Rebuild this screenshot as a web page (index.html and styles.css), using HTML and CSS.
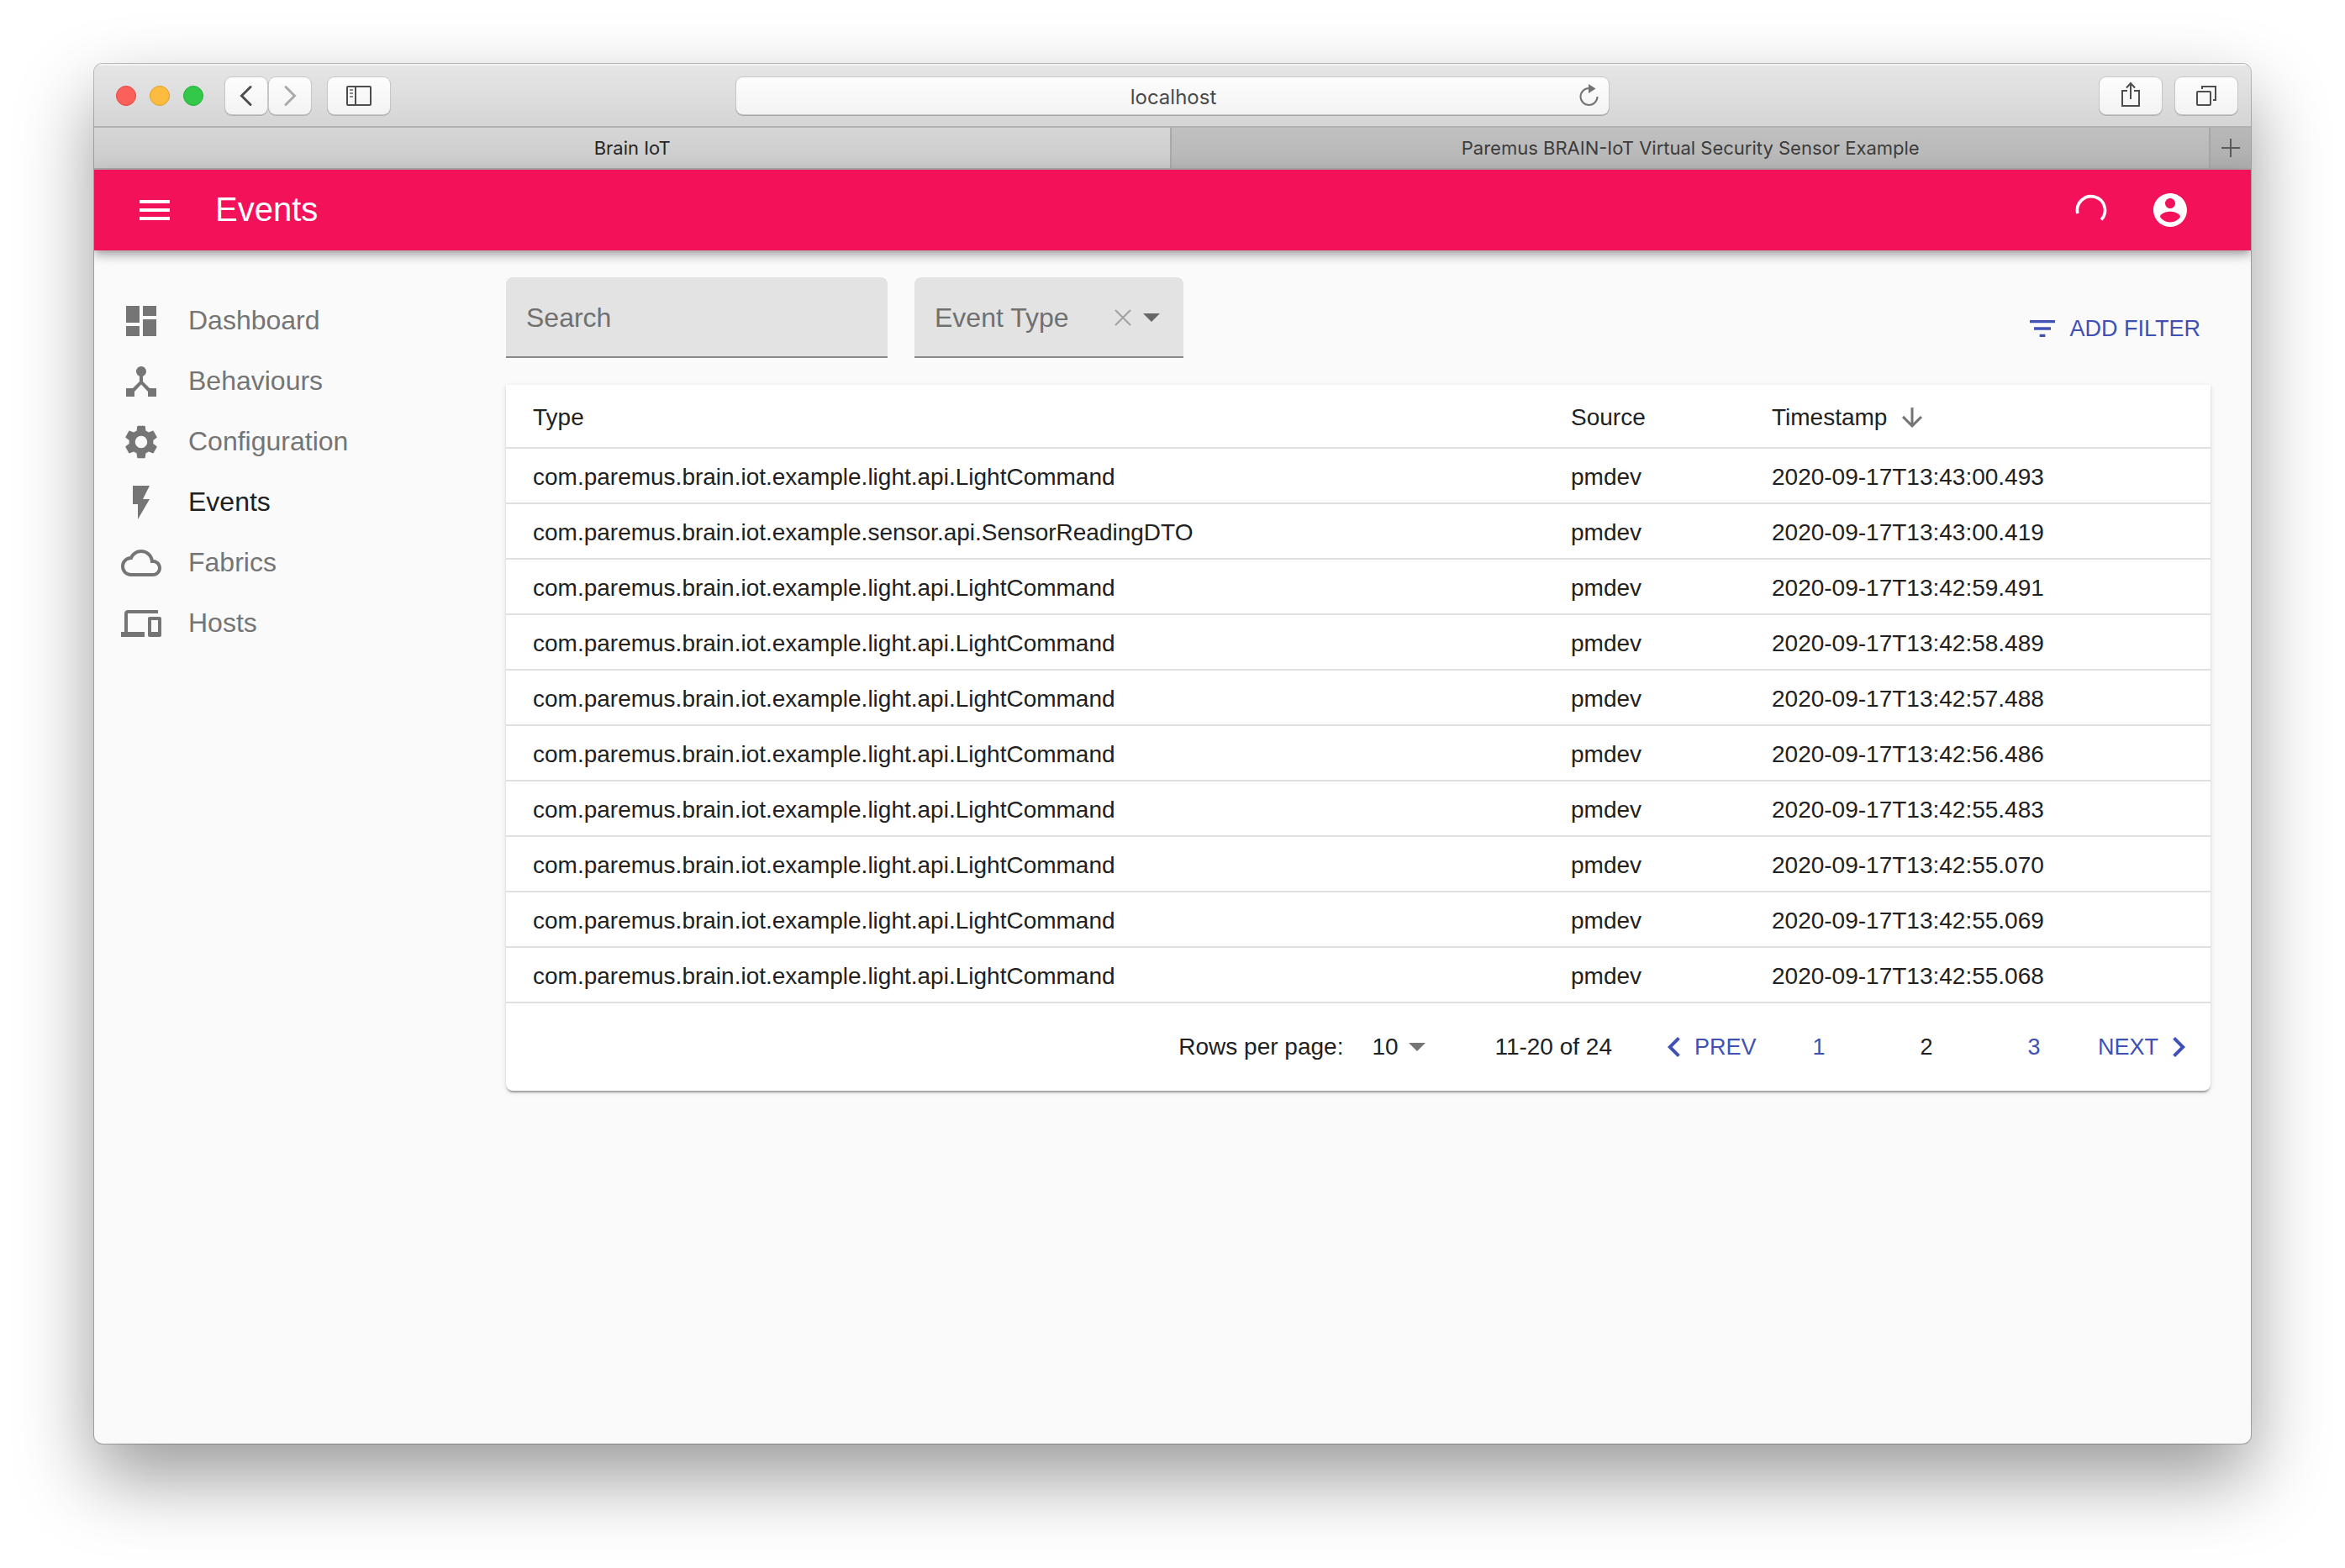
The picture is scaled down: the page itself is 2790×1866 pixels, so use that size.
FILE: index.html
```html
<!DOCTYPE html>
<html lang="en">
<head>
<meta charset="utf-8">
<meta name="viewport" content="width=device-width, initial-scale=1">
<title>Brain IoT</title>
<link rel="stylesheet" href="styles.css">
</head>
<body>
<div class="window">
  <header class="toolbar">
    <div class="toolbar-side">
      <div class="lights">
        <span class="light light-close"></span>
        <span class="light light-minimise"></span>
        <span class="light light-zoom"></span>
      </div>
      <div class="history">
        <button class="tool tool-narrow" type="button" aria-label="Back">
          <svg width="50" height="44" viewBox="0 0 50 44"><path d="M30 11.500L19.500 22L30 32.500" fill="none" stroke="#4d4d4d" stroke-width="3" stroke-linecap="round" stroke-linejoin="miter"/></svg>
        </button>
        <button class="tool tool-narrow" type="button" aria-label="Forward">
          <svg width="50" height="44" viewBox="0 0 50 44"><path d="M20 11.500L30.500 22L20 32.500" fill="none" stroke="#a9a9a9" stroke-width="3" stroke-linecap="round" stroke-linejoin="miter"/></svg>
        </button>
      </div>
      <button class="tool" type="button" aria-label="Show sidebar">
        <svg width="32" height="26" viewBox="0 0 32 26" fill="none" stroke="#4d4d4d" stroke-width="2"><rect x="2" y="2" width="28" height="22" rx="1"/><path d="M12 2v22"/><path d="M5 6h4M5 10h4M5 14h4" stroke="#8a8a8a"/></svg>
      </button>
    </div>
    <div class="address">
      <input class="address-input" type="text" value="localhost" aria-label="Address">
      <button class="reload" type="button" aria-label="Reload">
        <svg width="26" height="30" viewBox="0 0 26 30"><path d="M12.500 6A10 10 0 1 0 22.500 16" fill="none" stroke="#737373" stroke-width="2"/><path d="M12 1l8.500 5.500l-8.500 5.500z" fill="#737373"/></svg>
      </button>
    </div>
    <div class="toolbar-side toolbar-end">
      <button class="tool" type="button" aria-label="Share">
        <svg width="28" height="36" viewBox="0 0 28 36" fill="none" stroke="#4d4d4d" stroke-width="2"><path d="M10 12H4v18h20V12h-6"/><path d="M14 22V3M9 8.500l5-5.500l5 5.500"/></svg>
      </button>
      <button class="tool" type="button" aria-label="Show all tabs">
        <svg width="28" height="28" viewBox="0 0 28 28" fill="none" stroke="#4d4d4d" stroke-width="2"><rect x="3" y="9" width="16" height="16" rx="1"/><path d="M9 6V3h16v16h-3"/></svg>
      </button>
    </div>
  </header>
  <div class="tabs">
    <button class="tab tab-active" type="button">Brain IoT</button>
    <button class="tab" type="button">Paremus BRAIN-IoT Virtual Security Sensor Example</button>
    <button class="tab-new" type="button" aria-label="New tab">
      <svg width="24" height="24" viewBox="0 0 24 24" fill="none" stroke="#5a5a5a" stroke-width="2"><path d="M12 1v22M1 12h22"/></svg>
    </button>
  </div>

  <div class="appbar">
    <button class="icon-button" type="button" aria-label="Menu">
      <svg class="icon" viewBox="0 0 24 24"><path d="M3 18h18v-2H3v2zm0-5h18v-2H3v2zm0-7v2h18V6H3z"/></svg>
    </button>
    <h1 class="title">Events</h1>
    <svg class="spinner" viewBox="0 0 40 40"><path d="M3.900 24A16.500 16.500 0 1 1 32 31.500" fill="none" stroke="#fff" stroke-width="3.600"/></svg>
    <button class="icon-button" type="button" aria-label="Account">
      <svg class="icon" viewBox="0 0 24 24"><path d="M12 2C6.480 2 2 6.480 2 12s4.480 10 10 10 10-4.480 10-10S17.520 2 12 2zm0 3c1.660 0 3 1.340 3 3s-1.340 3-3 3-3-1.340-3-3 1.340-3 3-3zm0 14.200c-2.500 0-4.710-1.280-6-3.220.03-1.990 4-3.080 6-3.080 1.990 0 5.970 1.090 6 3.080-1.290 1.940-3.500 3.220-6 3.220z"/></svg>
    </button>
  </div>

  <div class="app">
    <nav class="nav">
      <a class="nav-item" href="#dashboard"><svg class="icon" viewBox="0 0 24 24"><path d="M3 13h8V3H3v10zm0 8h8v-6H3v6zm10 0h8V11h-8v10zm0-18v6h8V3h-8z"/></svg><span class="nav-label">Dashboard</span></a>
      <a class="nav-item" href="#behaviours"><svg class="icon" viewBox="0 0 24 24"><path d="M17 16l-4-4V8.820C14.160 8.400 15 7.300 15 6c0-1.660-1.340-3-3-3S9 4.340 9 6c0 1.300.84 2.400 2 2.820V12l-4 4H3v5h5v-3.050l4-4.200 4 4.200V21h5v-5h-4z"/></svg><span class="nav-label">Behaviours</span></a>
      <a class="nav-item" href="#configuration"><svg class="icon" viewBox="0 0 24 24"><path d="M19.140 12.940c.04-.3.06-.61.06-.94 0-.32-.02-.64-.07-.94l2.030-1.580c.18-.14.23-.41.12-.61l-1.920-3.320c-.12-.22-.37-.29-.59-.22l-2.390.96c-.5-.38-1.030-.7-1.620-.94l-.36-2.540c-.04-.24-.24-.41-.48-.41h-3.840c-.24 0-.43.17-.47.41l-.36 2.540c-.59.24-1.130.57-1.620.94l-2.390-.96c-.22-.08-.47 0-.59.22L2.740 8.870c-.12.21-.08.47.12.61l2.030 1.580c-.05.3-.09.63-.09.94s.02.64.07.94l-2.030 1.580c-.18.14-.23.41-.12.61l1.920 3.320c.12.22.37.29.59.22l2.390-.96c.5.38 1.030.7 1.620.94l.36 2.540c.05.24.24.41.48.41h3.840c.24 0 .44-.17.47-.41l.36-2.540c.59-.24 1.130-.56 1.620-.94l2.390.96c.22.08.47 0 .59-.22l1.920-3.320c.12-.22.07-.47-.12-.61l-2.010-1.580zM12 15.600c-1.980 0-3.600-1.620-3.600-3.600s1.620-3.600 3.600-3.600 3.600 1.620 3.600 3.600-1.620 3.600-3.600 3.600z"/></svg><span class="nav-label">Configuration</span></a>
      <a class="nav-item nav-current" href="#events" aria-current="page"><svg class="icon" viewBox="0 0 24 24"><path d="M7 2v11h3v9l7-12h-4l4-8z"/></svg><span class="nav-label">Events</span></a>
      <a class="nav-item" href="#fabrics"><svg class="icon" viewBox="0 0 24 24"><path d="M19.350 10.040C18.670 6.590 15.640 4 12 4 9.110 4 6.600 5.640 5.350 8.040 2.340 8.360 0 10.910 0 14c0 3.310 2.690 6 6 6h13c2.760 0 5-2.240 5-5 0-2.640-2.050-4.780-4.650-4.960zM19 18H6c-2.210 0-4-1.790-4-4s1.790-4 4-4h.71C7.370 7.690 9.480 6 12 6c3.040 0 5.500 2.460 5.500 5.500v.5H19c1.660 0 3 1.340 3 3s-1.340 3-3 3z"/></svg><span class="nav-label">Fabrics</span></a>
      <a class="nav-item" href="#hosts"><svg class="icon" viewBox="0 0 24 24"><path d="M4 6h18V4H4c-1.100 0-2 .9-2 2v11H0v3h14v-3H4V6zm19 2h-6c-.55 0-1 .45-1 1v10c0 .55.45 1 1 1h6c.55 0 1-.45 1-1V9c0-.55-.45-1-1-1zm-1 9h-4v-7h4v7z"/></svg><span class="nav-label">Hosts</span></a>
    </nav>

    <main class="main">
      <div class="filters">
        <input class="field search" type="text" placeholder="Search" aria-label="Search">
        <div class="field event-type">
          <select class="event-select" aria-label="Event Type"><option>Event Type</option></select>
          <button class="clear" type="button" aria-label="Clear event type">
            <svg width="20" height="20" viewBox="0 0 20 20"><path d="M1 1l18 18M19 1L1 19" stroke="#a2a2a2" stroke-width="2"/></svg>
          </button>
          <svg class="caret" width="20" height="10" viewBox="0 0 20 10"><path d="M0 0h20L10 10z" fill="#666"/></svg>
        </div>
        <button class="add-filter" type="button"><svg class="icon icon-small" viewBox="0 0 24 24"><path d="M10 18h4v-2h-4v2zM3 6v2h18V6H3zm3 7h12v-2H6v2z"/></svg>Add filter</button>
      </div>

      <section class="card">
        <table class="events">
          <colgroup><col><col class="col-source"><col class="col-time"></colgroup>
          <thead>
            <tr><th scope="col">Type</th><th scope="col">Source</th><th scope="col" aria-sort="descending"><button class="sort" type="button">Timestamp<svg class="icon sort-arrow" viewBox="0 0 24 24"><path d="M20 12l-1.410-1.410L13 16.170V4h-2v12.170l-5.580-5.590L4 12l8 8 8-8z"/></svg></button></th></tr>
          </thead>
          <tbody>
            <tr><td>com.paremus.brain.iot.example.light.api.LightCommand</td><td>pmdev</td><td>2020-09-17T13:43:00.493</td></tr>
            <tr><td>com.paremus.brain.iot.example.sensor.api.SensorReadingDTO</td><td>pmdev</td><td>2020-09-17T13:43:00.419</td></tr>
            <tr><td>com.paremus.brain.iot.example.light.api.LightCommand</td><td>pmdev</td><td>2020-09-17T13:42:59.491</td></tr>
            <tr><td>com.paremus.brain.iot.example.light.api.LightCommand</td><td>pmdev</td><td>2020-09-17T13:42:58.489</td></tr>
            <tr><td>com.paremus.brain.iot.example.light.api.LightCommand</td><td>pmdev</td><td>2020-09-17T13:42:57.488</td></tr>
            <tr><td>com.paremus.brain.iot.example.light.api.LightCommand</td><td>pmdev</td><td>2020-09-17T13:42:56.486</td></tr>
            <tr><td>com.paremus.brain.iot.example.light.api.LightCommand</td><td>pmdev</td><td>2020-09-17T13:42:55.483</td></tr>
            <tr><td>com.paremus.brain.iot.example.light.api.LightCommand</td><td>pmdev</td><td>2020-09-17T13:42:55.070</td></tr>
            <tr><td>com.paremus.brain.iot.example.light.api.LightCommand</td><td>pmdev</td><td>2020-09-17T13:42:55.069</td></tr>
            <tr><td>com.paremus.brain.iot.example.light.api.LightCommand</td><td>pmdev</td><td>2020-09-17T13:42:55.068</td></tr>
          </tbody>
        </table>
        <div class="pagination">
          <label for="rows">Rows per page:</label>
          <div class="rows">
            <select class="rows-select" id="rows"><option>10</option></select>
            <svg class="caret" width="20" height="10" viewBox="0 0 20 10"><path d="M0 0h20L10 10z" fill="#757575"/></svg>
          </div>
          <span class="range">11-20 of 24</span>
          <div class="pages">
            <button class="page page-step" type="button"><svg class="icon" viewBox="0 0 24 24"><path d="M15.410 7.410L14 6l-6 6 6 6 1.410-1.410L10.830 12z"/></svg>Prev</button>
            <button class="page" type="button">1</button>
            <button class="page page-current" type="button" aria-current="page">2</button>
            <button class="page" type="button">3</button>
            <button class="page page-step" type="button">Next<svg class="icon" viewBox="0 0 24 24"><path d="M10 6L8.590 7.410 13.170 12l-4.580 4.590L10 18l6-6z"/></svg></button>
          </div>
        </div>
      </section>
    </main>
  </div>
</div>
</body>
</html>
```

FILE: styles.css
```css
* {
  box-sizing: border-box;
}

body {
  display: flex;
  min-height: 100vh;
  margin: 0;
  padding: 76px 112px 148px;
  background: #fff;
  color: #212121;
  font-family: "Liberation Sans", Arial, sans-serif;
  font-size: 28px;
  line-height: 40px;
}

button,
input,
select {
  margin: 0;
  padding: 0;
  border: 0;
  background: none;
  color: inherit;
  font: inherit;
  appearance: none;
}

svg {
  display: block;
  flex: none;
}

.window {
  display: flex;
  flex: 1;
  flex-direction: column;
  min-width: 0;
  overflow: hidden;
  border-radius: 10px;
  background: #fafafa;
  box-shadow: 0 0 0 1px rgba(0, 0, 0, 0.24), 0 40px 90px rgba(0, 0, 0, 0.4);
}

/* Browser toolbar */

.toolbar {
  display: flex;
  align-items: center;
  height: 76px;
  padding: 2px 16px 0;
  border-bottom: 2px solid #b1b1b1;
  background: linear-gradient(#e6e6e6, #d5d5d5);
  box-shadow: inset 0 2px #f3f3f3;
  font-family: Inter, sans-serif;
}

.toolbar-side {
  display: flex;
  flex: 1 0 0;
  align-items: center;
  gap: 20px;
}

.toolbar-end {
  justify-content: flex-end;
  gap: 16px;
}

.lights {
  display: flex;
  gap: 16px;
  margin: 0 6px 0 10px;
}

.light {
  width: 24px;
  height: 24px;
  border: 1px solid;
  border-radius: 50%;
}

.light-close {
  border-color: #e2463f;
  background: #fc605b;
}

.light-minimise {
  border-color: #dfa023;
  background: #fdbc40;
}

.light-zoom {
  border-color: #24ac38;
  background: #34c84a;
}

.history {
  display: flex;
  gap: 2px;
}

.tool {
  display: flex;
  align-items: center;
  justify-content: center;
  width: 74px;
  height: 44px;
  border-radius: 8px;
  background: linear-gradient(#fdfdfd, #f3f3f3);
  box-shadow: 0 0 0 1px #c6c6c6, 0 1px 0 1px #b0b0b0;
}

.tool-narrow {
  width: 50px;
}

.address {
  position: relative;
  flex: 0 1 1038px;
  height: 44px;
  border-radius: 8px;
  background: linear-gradient(#fdfdfd, #f3f3f3);
  box-shadow: 0 0 0 1px #c6c6c6, 0 1px 0 1px #a6a6a6;
}

.address-input {
  width: 100%;
  height: 44px;
  padding: 2px 0 0 2px;
  color: #4a4a4a;
  font-size: 24px;
  text-align: center;
}

.reload {
  position: absolute;
  top: 7px;
  right: 10px;
}

/* Browser tabs */

.tabs {
  display: flex;
  height: 50px;
  border-bottom: 2px solid #a9a9a9;
  background: linear-gradient(#c0c0c0, #b6b6b6);
  font-family: Inter, sans-serif;
}

.tab {
  flex: 1234 1 0;
  min-width: 0;
  overflow: hidden;
  color: #3c3c3c;
  font-size: 22px;
  text-overflow: ellipsis;
  white-space: nowrap;
}

.tab-active {
  flex-grow: 1281;
  border-right: 2px solid #a9a9a9;
  background: linear-gradient(#d6d6d6, #cbcbcb);
  color: #262626;
}

.tab-new {
  display: flex;
  align-items: center;
  justify-content: center;
  width: 50px;
  border-left: 2px solid #a6a6a6;
  background: linear-gradient(#b8b8b8, #aeaeae);
}

/* App bar */

.appbar {
  display: flex;
  z-index: 1;
  align-items: center;
  height: 96px;
  padding: 0 48px 0 24px;
  background: #f31159;
  box-shadow: 0 4px 8px -2px rgba(0, 0, 0, 0.2), 0 8px 10px rgba(0, 0, 0, 0.14), 0 2px 20px rgba(0, 0, 0, 0.12);
  color: #fff;
}

.icon {
  width: 48px;
  height: 48px;
  fill: currentColor;
}

.icon-small {
  width: 40px;
  height: 40px;
}

.icon-button {
  padding: 24px;
}

.title {
  flex: 1;
  margin: 0 24px;
  padding-bottom: 2px;
  font-size: 40px;
  font-weight: 400;
  line-height: 64px;
}

.spinner {
  width: 40px;
  height: 40px;
  margin-right: 26px;
}

/* Page */

.app {
  display: flex;
  flex: 1;
}

.nav {
  flex: none;
  width: 490px;
  padding: 48px 32px;
}

.nav-item {
  display: flex;
  align-items: center;
  gap: 32px;
  height: 72px;
  color: #757575;
  font-size: 32px;
  text-decoration: none;
}

.nav-label {
  padding-bottom: 2px;
}

.nav-current {
  color: #212121;
}

.nav-current .icon {
  color: #757575;
}

.main {
  flex: 1;
  min-width: 0;
  padding: 32px 48px 32px 0;
}

.filters {
  display: flex;
  gap: 32px;
  margin-bottom: 32px;
}

.field {
  height: 96px;
  border-bottom: 2px solid #888;
  border-radius: 8px 8px 0 0;
  background: #e3e3e3;
  color: #707070;
  font-size: 32px;
}

.search {
  width: 454px;
  padding: 2px 24px 0;
}

.search::placeholder {
  color: #707070;
  opacity: 1;
}

.event-type {
  display: flex;
  position: relative;
  align-items: center;
  width: 320px;
  padding: 2px 28px 0 0;
}

.event-select {
  flex: 1;
  height: 92px;
  padding: 0 24px;
}

.clear {
  margin-right: 14px;
}

.caret {
  pointer-events: none;
}

.add-filter {
  display: flex;
  align-items: center;
  align-self: center;
  gap: 12px;
  margin-top: 26px;
  margin-left: auto;
  padding-right: 12px;
  color: #3f51b5;
  font-size: 27px;
  text-transform: uppercase;
}

/* Events table */

.card {
  border-radius: 0 0 8px 8px;
  background: #fff;
  box-shadow: 0 4px 2px -2px rgba(0, 0, 0, 0.2), 0 2px 2px rgba(0, 0, 0, 0.14), 0 2px 6px rgba(0, 0, 0, 0.12);
}

.events {
  width: 100%;
  border-spacing: 0;
  table-layout: fixed;
}

.col-source {
  width: 239px;
}

.col-time {
  width: 554px;
}

.events th,
.events td {
  height: 66px;
  padding: 3px 32px 0;
  border-bottom: 2px solid #e0e0e0;
  font-weight: 400;
  text-align: left;
}

.events th {
  height: 76px;
}

.sort {
  display: flex;
  align-items: center;
  gap: 12px;
}

.sort-arrow {
  width: 36px;
  height: 36px;
  color: #757575;
}

.pagination {
  display: flex;
  align-items: center;
  justify-content: flex-end;
  height: 104px;
  padding-right: 14px;
}

.rows {
  display: flex;
  align-items: center;
  margin: 0 82px 0 34px;
}

.rows-select {
  width: 44px;
}

.range {
  margin-right: 50px;
}

.pages {
  display: flex;
}

.page {
  width: 128px;
  height: 60px;
  color: #3f51b5;
  font-size: 27px;
  text-transform: uppercase;
}

.page-step {
  display: flex;
  align-items: center;
  width: 132px;
}

.page-step:last-child {
  justify-content: flex-end;
}

.page-current {
  color: #212121;
}
```
